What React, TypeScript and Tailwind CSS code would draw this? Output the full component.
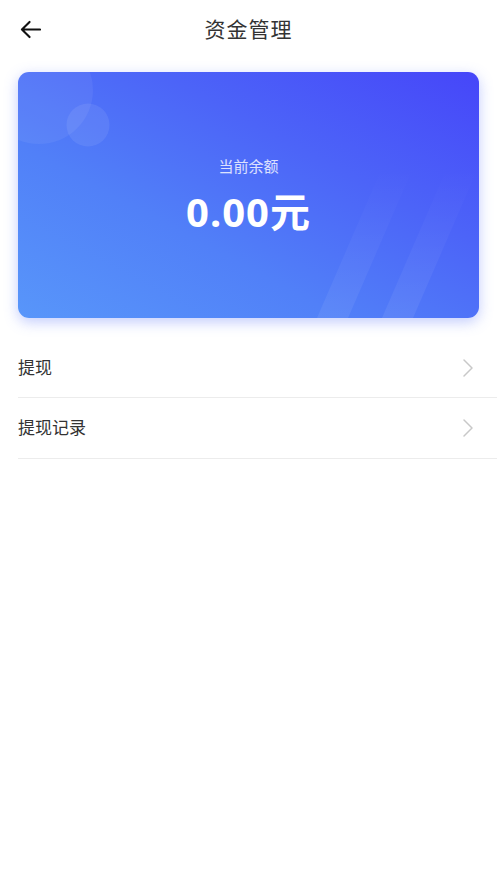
import React from "react";

const Chevron = () => (
  <svg width="14" height="20" viewBox="0 0 14 20" fill="none">
    <path d="M3 2 L11 10 L3 18" stroke="#c8c8c8" strokeWidth="1.5" strokeLinecap="round" strokeLinejoin="round" />
  </svg>
);

export default function App() {
  return (
    <div
      className="w-[497px] min-h-[883px] bg-white flex flex-col"
      style={{ fontFamily: '"Noto Sans", "Noto Sans CJK SC", sans-serif' }}
    >
      <header className="relative h-[58px] flex items-center justify-center">
        <button className="absolute left-[18px] top-[18px] w-[24px] h-[22px] flex items-center justify-center">
          <svg width="21" height="19" viewBox="0 0 22 20" fill="none">
            <path d="M21 10 H3 M10 2 L2 10 L10 18" stroke="#111" strokeWidth="2.2" strokeLinecap="round" strokeLinejoin="round" />
          </svg>
        </button>
        <h1 className="text-[21px] text-[#333] tracking-[1px] leading-none">资金管理</h1>
      </header>

      <div className="px-[18px] pt-[14px]">
        <div className="relative h-[246px] rounded-[11px] overflow-hidden bg-[linear-gradient(to_top_right,#5896fa,#5180f8_35%,#4c64f8_65%,#4646f9)] shadow-[0_4px_14px_rgba(80,110,250,0.35)] flex flex-col items-center justify-center">
          <svg className="absolute inset-0" width="461" height="246" viewBox="0 0 461 246">
            <defs>
              <linearGradient id="fade" x1="0" y1="1" x2="0" y2="0">
                <stop offset="0" stopColor="white" stopOpacity="0.07" />
                <stop offset="1" stopColor="white" stopOpacity="0" />
              </linearGradient>
            </defs>
            <circle cx="21" cy="18" r="54" fill="white" fillOpacity="0.06" />
            <circle cx="70" cy="53" r="21.5" fill="white" fillOpacity="0.08" />
            <polygon points="299,246 330,246 395,96 364,96" fill="url(#fade)" />
            <polygon points="364,246 395,246 460,96 429,96" fill="url(#fade)" />
          </svg>
          <div className="relative text-[15px] text-white/80 leading-none mt-[0px]">当前余额</div>
          <div className="relative mt-[18px] text-white font-bold text-[40px] leading-none tracking-[1px]">
            0.00<span className="font-semibold">元</span>
          </div>
        </div>
      </div>

      <div className="mt-[20px] pl-[18px]">
        <div className="h-[60px] flex items-center justify-between border-b border-[#ececec] pr-[22px]">
          <span className="text-[17px] text-[#333]">提现</span>
          <Chevron />
        </div>
        <div className="h-[61px] flex items-center justify-between border-b border-[#ececec] pr-[22px]">
          <span className="text-[17px] text-[#333]">提现记录</span>
          <Chevron />
        </div>
      </div>
    </div>
  );
}
